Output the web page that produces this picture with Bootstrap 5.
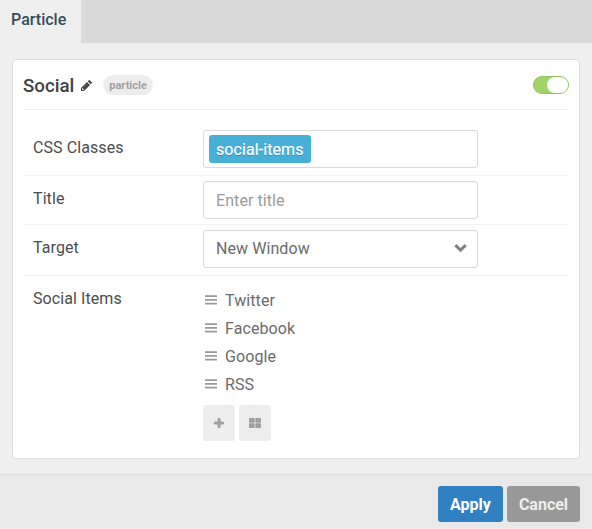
<!DOCTYPE html>
<html lang="en">
<head>
<meta charset="utf-8">
<meta name="viewport" content="width=device-width, initial-scale=1">
<title>Particle settings</title>
<link href="https://cdn.jsdelivr.net/npm/bootstrap@5.3.0/dist/css/bootstrap.min.css" rel="stylesheet">
<style>
body{font-family:Roboto,"Liberation Sans",sans-serif;font-size:16px;line-height:24px;color:#4d4d4d;background:#efefef;height:529px;overflow:hidden}
.tabbar{height:43px;background:#dadada}
.tabbar .nav-link{width:81px;height:43px;padding:8px 0 0 11px;background:#efefef;color:#354d59;font-weight:500}
.panel{margin:16px 12px 0;height:400px;padding:0 10px;border:1px solid #dcdcdc;border-radius:4px}
.panel-head{height:50px;padding-top:1px;border-bottom:1px solid #ededed}
.panel-head h1{font-size:18.700px;font-weight:500;line-height:24px;color:#424242;padding-top:1px}
.pencil{margin:1px 0 0 7px}
.tag{font-size:11px;font-weight:700;line-height:21px;height:20px;padding:0 6px;background:#ededed;color:#a2a2a2;border-radius:10px;margin-left:11px}
.switch{width:36px;height:18px;border-radius:9px;background:#9fd467;border:1px solid #94c261;padding:0}
.switch span{width:21px;height:16px;border-radius:8px;background:#fff}
.setting{padding:5px 10px 5px;border-bottom:1px solid #f3f3f3;letter-spacing:.08px}
.setting label,.setting .name{width:170px;padding-top:6px}
.setting.first{padding-top:20px;padding-bottom:7px}
.setting.third{padding-bottom:7px}
.setting.last{padding-top:5px}
.setting .field{width:275px;height:38px;border:1px solid #dadada;border-radius:3px;background:#fff;font-size:16px;line-height:24px;letter-spacing:.08px;color:#6b6b6b}
.setting .form-control{padding:6px 12px;box-shadow:inset 0 1px 2px #0000000c}
.setting .form-control::placeholder{color:#9b9b9b}
.chip{height:28px;margin-left:5px;padding:1px 7px 0;line-height:28px;border-radius:3px;background:#48b0d7;color:#fff;text-shadow:0 1px 0 #2f8fb3;-webkit-text-stroke:.2px #fff}
.target-arrow{margin:0 10px 1px 0}
.items{padding-top:6px}
.items li{height:28px;line-height:28px;color:#6b6b6b}
.items svg{margin:0 8px 2px 2px}
.tools{margin-top:6px}
.tool{width:32px;height:36px;padding:0;border:0;border-radius:3px;background:#ededed;color:#a0a0a0}
.actions{margin-top:15px;height:54px;padding:11px 12px 0 0;border-top:1px solid #dcdcdc;background:#e9e9e9}
.actions .btn{height:36px;padding:0;border:0;border-radius:3px;font-weight:700;font-size:16px;line-height:38px}
.apply,.apply:hover{width:65px;background:#3180c2;color:#fff}
.cancel,.cancel:hover{width:73px;background:#999;color:#efefef}
</style>
</head>
<body>
<nav class="nav tabbar"><a class="nav-link" href="#">Particle</a></nav>
<main class="panel bg-white">
  <header class="panel-head d-flex align-items-center">
    <h1 class="m-0">Social</h1>
    <svg class="pencil" width="11" height="11" viewBox="0 0 11 11" fill="#424242"><path d="M0 11V8L6 2l3 3-6 6zM1 8.600v.8h.7v.8h.8l.5-.5-1.500-1.600zM6.700 1.300l.9-.9q.7-.6 1.300 0L10.600 2q.6.600 0 1.300l-.9.900z" fill-rule="evenodd"/><path d="M2.700 7.200 6 3.900" stroke="#999" stroke-width=".5"/></svg>
    <span class="tag">particle</span>
    <div class="switch ms-auto d-flex justify-content-end" role="switch" aria-checked="true"><span></span></div>
  </header>
  <div class="setting first d-flex">
    <div class="name">CSS Classes</div>
    <div class="field d-flex align-items-center"><span class="chip">social-items</span></div>
  </div>
  <div class="setting d-flex">
    <label for="title">Title</label>
    <input id="title" class="form-control field" placeholder="Enter title">
  </div>
  <div class="setting third d-flex">
    <div class="name">Target</div>
    <div class="field d-flex align-items-center justify-content-between" role="combobox"><span class="ps-2 ms-1">New Window</span>
      <svg width="13" height="9" viewBox="0 0 13 9" fill="none" stroke="#808080" stroke-width="3" class="target-arrow"><path d="m1.300 1.200 5.200 5 5.200-5"/></svg>
    </div>
  </div>
  <div class="setting last d-flex border-0">
    <div class="name">Social Items</div>
    <div>
      <ul class="items list-unstyled m-0">
        <li class="d-flex align-items-center"><svg width="12" height="10" viewBox="0 0 12 10" fill="#999"><path d="M0 .3h12V2H0zM0 4h12v1.700H0zM0 7.700h12v1.700H0z"/></svg>Twitter</li>
        <li class="d-flex align-items-center"><svg width="12" height="10" viewBox="0 0 12 10" fill="#999"><path d="M0 .3h12V2H0zM0 4h12v1.700H0zM0 7.700h12v1.700H0z"/></svg>Facebook</li>
        <li class="d-flex align-items-center"><svg width="12" height="10" viewBox="0 0 12 10" fill="#999"><path d="M0 .3h12V2H0zM0 4h12v1.700H0zM0 7.700h12v1.700H0z"/></svg>Google</li>
        <li class="d-flex align-items-center"><svg width="12" height="10" viewBox="0 0 12 10" fill="#999"><path d="M0 .3h12V2H0zM0 4h12v1.700H0zM0 7.700h12v1.700H0z"/></svg>RSS</li>
      </ul>
      <div class="tools d-flex gap-1">
        <button class="btn tool d-flex align-items-center justify-content-center" aria-label="Add item"><svg width="12" height="12" viewBox="0 0 12 12" fill="none" stroke="currentColor" stroke-width="3" stroke-linecap="round"><path d="M6 2.200v7.600M2.200 6h7.600"/></svg></button>
        <button class="btn tool d-flex align-items-center justify-content-center" aria-label="Edit all items"><svg width="12" height="10" viewBox="0 0 12 10" fill="currentColor"><rect width="5.700" height="4.700" rx=".7"/><rect x="6.300" width="5.700" height="4.700" rx=".7"/><rect y="5.300" width="5.700" height="4.700" rx=".7"/><rect x="6.300" y="5.300" width="5.700" height="4.700" rx=".7"/></svg></button>
      </div>
    </div>
  </div>
</main>
<footer class="actions d-flex justify-content-end gap-1">
  <button class="btn apply">Apply</button>
  <button class="btn cancel">Cancel</button>
</footer>
<script src="https://cdn.jsdelivr.net/npm/bootstrap@5.3.0/dist/js/bootstrap.bundle.min.js"></script>
</body>
</html>
